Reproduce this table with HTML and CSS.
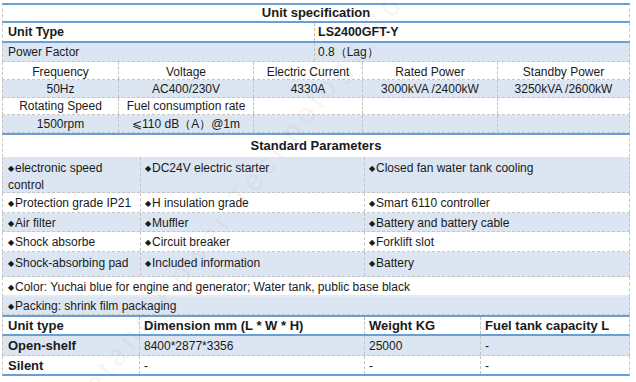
FILE: index.html
```html
<!DOCTYPE html>
<html>
<head>
<meta charset="utf-8">
<link rel="stylesheet" href="styles.css">
</head>
<body>
<div class="sheet">
  <div class="row h20 blue-top blue-bottom one"><div class="cell title"><span>Unit specification</span></div></div>
  <div class="row h20 blue-bottom c-a"><div class="cell b12"><span>Unit Type</span></div><div class="cell b12"><span>LS2400GFT-Y</span></div></div>
  <div class="row h19 fill c-a"><div class="cell"><span>Power Factor</span></div><div class="cell"><span>0.8（Lag）</span></div></div>

  <div class="row h18 c-b center low"><div class="cell"><span>Frequency</span></div><div class="cell"><span>Voltage</span></div><div class="cell"><span>Electric Current</span></div><div class="cell"><span>Rated Power</span></div><div class="cell"><span>Standby Power</span></div></div>
  <div class="row h18 fill c-b center"><div class="cell"><span>50Hz</span></div><div class="cell"><span>AC400/230V</span></div><div class="cell"><span>4330A</span></div><div class="cell"><span>3000kVA /2400kW</span></div><div class="cell"><span>3250kVA /2600kW</span></div></div>
  <div class="row h17 c-b center"><div class="cell"><span>Rotating Speed</span></div><div class="cell"><span>Fuel consumption rate</span></div><div class="cell"></div><div class="cell"></div><div class="cell"></div></div>
  <div class="row h18 fill c-b center"><div class="cell"><span>1500rpm</span></div><div class="cell"><span>⩽110 dB（A）@1m</span></div><div class="cell"></div><div class="cell"></div><div class="cell"></div></div>

  <div class="row h24 blue-top plain-bottom one"><div class="cell title"><span>Standard Parameters</span></div></div>
  <div class="row h36 fill c-c top"><div class="cell wrap"><span><i class="dot">◆</i>electronic speed control</span></div><div class="cell"><span><i class="dot">◆</i>DC24V electric starter</span></div><div class="cell"><span><i class="dot">◆</i>Closed fan water tank cooling</span></div></div>
  <div class="row h20 c-c low"><div class="cell"><span><i class="dot">◆</i>Protection grade IP21</span></div><div class="cell"><span><i class="dot">◆</i>H insulation grade</span></div><div class="cell"><span><i class="dot">◆</i>Smart 6110 controller</span></div></div>
  <div class="row h19 fill c-c low"><div class="cell"><span><i class="dot">◆</i>Air filter</span></div><div class="cell"><span><i class="dot">◆</i>Muffler</span></div><div class="cell"><span><i class="dot">◆</i>Battery and battery cable</span></div></div>
  <div class="row h20 c-c low"><div class="cell"><span><i class="dot">◆</i>Shock absorbe</span></div><div class="cell"><span><i class="dot">◆</i>Circuit breaker</span></div><div class="cell"><span><i class="dot">◆</i>Forklift slot</span></div></div>
  <div class="row h25 fill c-c top"><div class="cell"><span><i class="dot">◆</i>Shock-absorbing pad</span></div><div class="cell"><span><i class="dot">◆</i>Included information</span></div><div class="cell"><span><i class="dot">◆</i>Battery</span></div></div>
  <div class="row h20 one light-bottom low"><div class="cell"><span><i class="dot">◆</i>Color: Yuchai blue for engine and generator; Water tank, public base black</span></div></div>
  <div class="row h18 fill one low"><div class="cell"><span><i class="dot">◆</i>Packing: shrink film packaging</span></div></div>

  <div class="row h21 blue-top blue-bottom c-d"><div class="cell b13"><span>Unit type</span></div><div class="cell b13"><span>Dimension mm (L * W * H)</span></div><div class="cell b13"><span>Weight KG</span></div><div class="cell b13"><span>Fuel tank capacity L</span></div></div>
  <div class="row h20 fill c-d"><div class="cell b13"><span>Open-shelf</span></div><div class="cell"><span>8400*2877*3356</span></div><div class="cell"><span>25000</span></div><div class="cell"><span>-</span></div></div>
  <div class="row h20 blue-bottom c-d low"><div class="cell b13"><span>Silent</span></div><div class="cell"><span>-</span></div><div class="cell"><span>-</span></div><div class="cell"><span>-</span></div></div>

  <div class="watermark">Wetang Power Technology Co</div>
</div>
</body>
</html>
```
FILE: styles.css
```css
html, body {
  margin: 0;
  padding: 0;
  background: #ffffff;
}
body {
  font-family: "Liberation Sans", Arial, sans-serif;
  font-size: 12px;
  color: #1a1a1a;
}
.sheet {
  position: relative;
  margin: 3px 0 0 2px;
  width: 628px;
  height: 379px;
  overflow: hidden;
}
.row {
  display: grid;
  box-sizing: border-box;
  border-bottom: 1px dashed #c6c6c6;
  border-left: 1px dashed #c3c3c3;
  border-right: 1px dashed #c3c3c3;
  width: 628px;
  position: relative;
  z-index: 1;
}
.one { grid-template-columns: 1fr; }
.c-a { grid-template-columns: 311px 1fr; }
.c-b { grid-template-columns: 115px 135px 109px 135px 1fr; }
.c-c { grid-template-columns: 137px 224px 1fr; }
.c-d { grid-template-columns: 136px 225px 116px 1fr; }
.h17 { height: 17px; }
.h18 { height: 18px; }
.h19 { height: 19px; }
.h20 { height: 20px; }
.h21 { height: 21px; }
.h24 { height: 24px; }
.h25 { height: 25px; }
.h36 { height: 36px; }
.blue-top { border-top: 2px solid #6a9fd3; }
.blue-bottom { border-bottom: 2px solid #6a9fd3; }
.plain-bottom { border-bottom: 1px solid #ffffff; }
.light-bottom { border-bottom: 2px solid #e2ebf6; }
.fill { background: #dce6f2; }
.cell {
  display: flex;
  align-items: center;
  padding: 0 5px;
  border-left: 1px dashed #c3c3c3;
  white-space: nowrap;
  overflow: hidden;
  line-height: 16px;
  min-width: 0;
}
.cell:first-child { border-left: none; }
.c-a .cell + .cell { padding-left: 3px; }
.c-c .cell + .cell { padding-left: 4px; }
.c-d .cell + .cell { padding-left: 4px; }
.center .cell { justify-content: center; }
.top .cell { align-items: flex-start; padding-top: 3px; }
.low .cell { padding-top: 2px; }
.wrap { white-space: normal; }
.title {
  justify-content: center;
  font-weight: bold;
  font-size: 13px;
}
.b12 { font-weight: bold; font-size: 12.5px; }
.b13 { font-weight: bold; font-size: 13px; }
.dot {
  font-style: normal;
  font-size: 8px;
  margin-right: 1px;
  vertical-align: 1px;
}
.watermark {
  position: absolute;
  left: -40px;
  top: 175px;
  width: 560px;
  transform: rotate(-52deg);
  font-size: 30px;
  letter-spacing: 5px;
  color: rgba(110, 110, 110, 0.08);
  white-space: nowrap;
  pointer-events: none;
  z-index: 2;
}
```
